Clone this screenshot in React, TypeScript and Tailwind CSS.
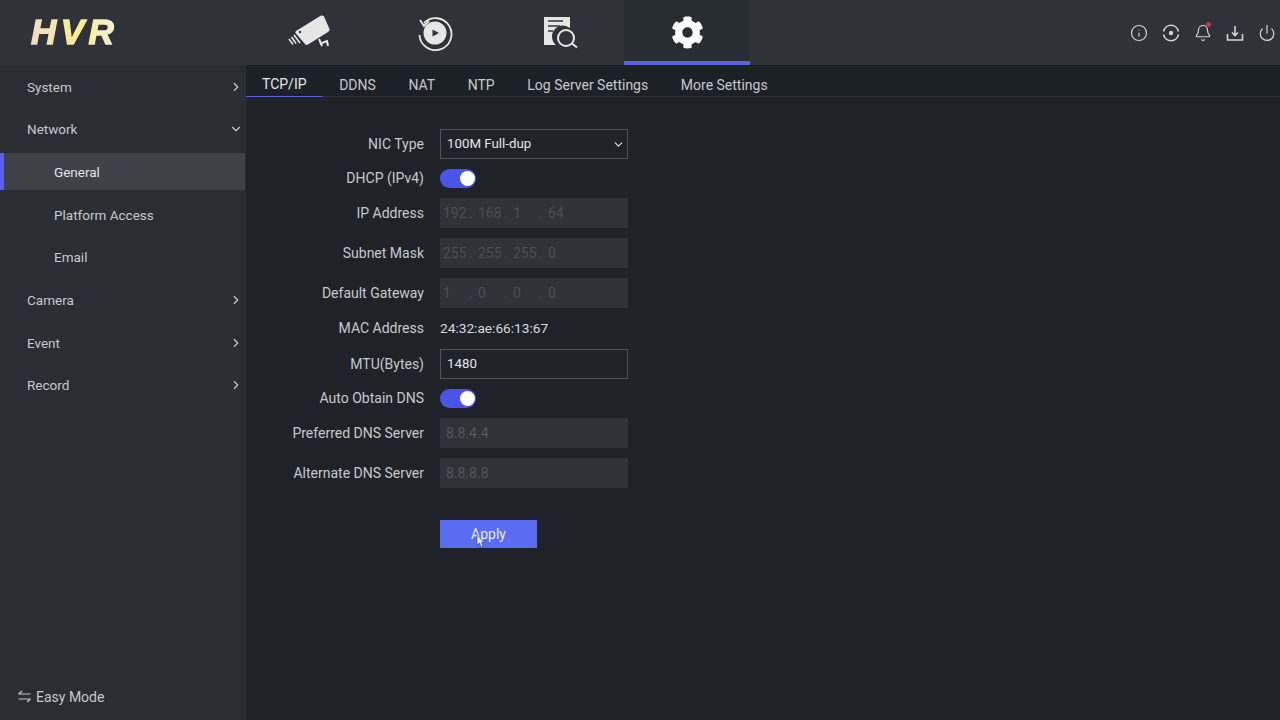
import { Bell, ChevronDown, ChevronRight, Info, Power } from "lucide-react";
import { FaCog } from "react-icons/fa";

const SIDE_ITEMS = [
  { label: "System", arrow: "right" },
  { label: "Network", arrow: "down" },
  { label: "General", sub: true, active: true },
  { label: "Platform Access", sub: true },
  { label: "Email", sub: true },
  { label: "Camera", arrow: "right" },
  { label: "Event", arrow: "right" },
  { label: "Record", arrow: "right" },
];

const SUB_TABS = ["TCP/IP", "DDNS", "NAT", "NTP", "Log Server Settings", "More Settings"];

function CameraIcon() {
  return (
    <svg width="42" height="36" viewBox="288 15 42 36" fill="none">
      <path
        d="M296 31 L321 15.5 Q323 15 324 16.5 L329.5 29 Q330 31 328 32 L308 44.5 Q306 45.5 305 44 L295.5 33 Q295 32 296 31 Z"
        fill="#e6e6e6"
      />
      <circle cx="300" cy="32" r="1.2" fill="#31343b" />
      <path d="M294 35 L300 43 M291.5 37 L296 43.5 M289 39 L293 44.5" stroke="#e6e6e6" strokeWidth="1.5" />
      <path d="M319 39 L322 46 M322 43 L327 41 L328 46" stroke="#e6e6e6" strokeWidth="2" />
    </svg>
  );
}

function PlaybackIcon() {
  return (
    <svg width="36" height="36" viewBox="0 0 36 36" fill="none">
      <path d="M7 8 A16 16 0 1 1 2.5 20" stroke="#e6e6e6" strokeWidth="1.8" />
      <path d="M3 5 L7 11 L12 6" stroke="#e6e6e6" strokeWidth="1.8" />
      <circle cx="18" cy="18" r="11.5" fill="#e6e6e6" />
      <path d="M15.5 14.5 L22 18 L15.5 21.5 Z" fill="#31343b" />
    </svg>
  );
}

function LogSearchIcon() {
  return (
    <svg width="36" height="34" viewBox="543 16 36 34" fill="none">
      <path d="M544 17 H570 V28 A11 11 0 0 0 556 45 H544 Z" fill="#e6e6e6" />
      <path d="M548 21 H563 M548 26 H560 M548 31 H553" stroke="#31343b" strokeWidth="1.6" />
      <circle cx="566" cy="38" r="8" stroke="#e6e6e6" strokeWidth="2" />
      <path d="M572 43.5 L577 47.5" stroke="#e6e6e6" strokeWidth="2" />
    </svg>
  );
}

function TargetIcon() {
  return (
    <svg width="18" height="18" viewBox="0 0 18 18" fill="none" stroke="#d4d4d4" strokeWidth="1.6">
      <path d="M1.6 7.5 A7.5 7.5 0 0 1 16.4 7.5 M16.4 10.5 A7.5 7.5 0 0 1 1.6 10.5" />
      <circle cx="9" cy="9" r="2.2" fill="#d4d4d4" stroke="none" />
    </svg>
  );
}

function ImportIcon() {
  return (
    <svg width="18" height="18" viewBox="0 0 18 18" fill="none" stroke="#d4d4d4" strokeWidth="1.6">
      <path d="M1.5 10 V16 H16.5 V10" />
      <path d="M9 2 V11 M6 8.5 L9 11.5 L12 8.5" />
    </svg>
  );
}

function Toggle() {
  return (
    <div className="flex h-[19px] w-9 items-center justify-end rounded-full bg-[#4a55e6] pr-[1px]">
      <div className="h-[15px] w-[15px] rounded-full bg-white" />
    </div>
  );
}

function Label({ children }: { children: string }) {
  return <div className="w-[178px] text-right text-[#c6c8cb]">{children}</div>;
}

function IpField({ parts }: { parts: string[] }) {
  return (
    <div className="flex h-[30px] w-[188px] items-center bg-[#2f3238] text-[#4c4f54]">
      {parts.map((p, i) => (
        <div key={i} className="flex w-[35px] items-center">
          <span className="w-[29px] pl-[3px]">{p}</span>
          {i < 3 && <span>.</span>}
        </div>
      ))}
    </div>
  );
}

function DisabledField({ value }: { value: string }) {
  return (
    <div className="flex h-[30px] w-[188px] items-center bg-[#2f3238] pl-[6px] text-[#55585d]">
      {value}
    </div>
  );
}

function Row({ label, height, children }: { label: string; height: string; children: React.ReactNode }) {
  return (
    <div className={`flex items-center gap-4 ${height}`}>
      <Label>{label}</Label>
      {children}
    </div>
  );
}

export default function App() {
  return (
    <div
      className="flex h-[720px] w-[1280px] flex-col overflow-hidden bg-[#1f2329] text-[14px] text-[#d0d2d5]"
      style={{ fontFamily: 'Roboto, "Liberation Sans", Arial, sans-serif' }}
    >
      {/* Top bar */}
      <div className="flex h-[65px] shrink-0 items-stretch bg-[#2f3238]">
        <div className="flex w-[246px] items-center pl-[31px]">
          <span
            className="bg-gradient-to-r from-[#f2dcc8] via-[#f7ee90] to-[#f3f1e4] bg-clip-text pr-2 text-[35px] font-bold italic tracking-[4.5px] text-transparent [-webkit-text-stroke:1.4px_transparent]"
            style={{ fontFamily: '"Liberation Sans", Arial, sans-serif' }}
          >
            HVR
          </span>
        </div>
        <div className="flex w-[126px] items-center justify-center"><CameraIcon /></div>
        <div className="flex w-[126px] items-center justify-center"><PlaybackIcon /></div>
        <div className="flex w-[126px] items-center justify-center"><LogSearchIcon /></div>
        <div className="flex w-[126px] items-center justify-center border-b-4 border-[#5a62e0] bg-[#282c33] pt-1 text-white">
          <FaCog size={33} />
        </div>
        <div className="flex flex-1 items-center justify-end gap-[14px] pr-[4px] text-[#d4d4d4]">
          <Info size={18} strokeWidth={1.6} />
          <TargetIcon />
          <div className="relative">
            <Bell size={18} strokeWidth={1.6} />
            <div className="absolute right-[1px] top-[-2px] h-[5px] w-[5px] rounded-full bg-[#e0323c]" />
          </div>
          <ImportIcon />
          <Power size={18} strokeWidth={1.6} />
        </div>
      </div>

      <div className="flex flex-1">
        {/* Sidebar */}
        <div className="flex w-[246px] shrink-0 flex-col bg-[#2a2d34] text-[13.5px]">
          {SIDE_ITEMS.map((item) => (
            <div key={item.label} className={`h-[42.67px] pr-[1px] ${item.active ? "py-[3px]" : "pt-[1px]"}`}>
              <div
                className={`flex h-full items-center justify-between pr-[2px] ${item.sub ? "pl-[54px]" : "pl-[27px]"} ${
                  item.active ? "border-l-4 border-[#5b5ef0] !pl-[50px] bg-[#3e4147] text-[#e4e5e7]" : "text-[#c6c8cb]"
                }`}
              >
                <span>{item.label}</span>
                {item.arrow === "right" && <ChevronRight size={14} strokeWidth={2} />}
                {item.arrow === "down" && <ChevronDown size={14} strokeWidth={2} />}
              </div>
            </div>
          ))}
          <div className="mt-auto flex h-[47px] items-start gap-[5px] pl-[18px] pt-[14px] text-[14px] text-[#c6c8cb]">
            <svg width="13" height="16" viewBox="0 0 13 16" fill="none" stroke="#c6c8cb" strokeWidth="1.2" className="mt-[1px]">
              <path d="M0.5 6 H12.5 M0.5 6 L4 3 M0.5 11 H12.5 M12.5 11 L9 14" />
            </svg>
            <span>Easy Mode</span>
          </div>
        </div>

        {/* Main */}
        <div className="relative flex-1">
          <div className="flex h-[32px] gap-[0.6px] border-b border-[#2a2d34] bg-[#1c2027]">
            {SUB_TABS.map((tab, i) => (
              <div
                key={tab}
                className={`flex h-[32px] items-center px-4 pt-[8px] ${
                  i === 0 ? "border-b border-[#5a62e0] text-[#e4e5e7]" : "text-[#c6c8cb]"
                }`}
              >
                {tab}
              </div>
            ))}
          </div>

          <div className="pt-[32px]">
            <Row label="NIC Type" height="h-[30px]">
              <div className="flex h-[30px] w-[188px] items-center justify-between border border-[#4f535a] pl-[6px] pr-[2px] text-[13.3px] text-[#e4e5e7]">
                100M Full-dup
                <ChevronDown size={13} strokeWidth={2} />
              </div>
            </Row>
            <Row label="DHCP (IPv4)" height="h-[39px]"><Toggle /></Row>
            <Row label="IP Address" height="h-[30px]"><IpField parts={["192", "168", "1", "64"]} /></Row>
            <div className="mt-[10px]">
              <Row label="Subnet Mask" height="h-[30px]"><IpField parts={["255", "255", "255", "0"]} /></Row>
            </div>
            <div className="mt-[10px]">
              <Row label="Default Gateway" height="h-[30px]"><IpField parts={["1", "0", "0", "0"]} /></Row>
            </div>
            <Row label="MAC Address" height="h-[41px]">
              <span className="text-[13.7px] text-[#d8d9dc]">24:32:ae:66:13:67</span>
            </Row>
            <Row label="MTU(Bytes)" height="h-[30px]">
              <div className="flex h-[30px] w-[188px] items-center border border-[#4f535a] pl-[6px] text-[13.3px] text-[#e4e5e7]">1480</div>
            </Row>
            <Row label="Auto Obtain DNS" height="h-[39px]"><Toggle /></Row>
            <Row label="Preferred DNS Server" height="h-[30px]"><DisabledField value="8.8.4.4" /></Row>
            <div className="mt-[10px]">
              <Row label="Alternate DNS Server" height="h-[30px]"><DisabledField value="8.8.8.8" /></Row>
            </div>
            <div className="relative ml-[194px] mt-[32px] flex h-[28px] w-[97px] items-center justify-center bg-[#5a6cf2] text-[#e8ebff]">
              Apply
              <svg width="9" height="13" viewBox="0 0 9 13" className="absolute left-[36px] top-[15px]">
                <path d="M1 0 V10 L3.5 8 L5 12 L7 11 L5.5 7.5 L8 7.5 Z" fill="#dfe3f5" stroke="#333" strokeWidth="0.5" />
              </svg>
            </div>
          </div>
        </div>
      </div>
    </div>
  );
}
